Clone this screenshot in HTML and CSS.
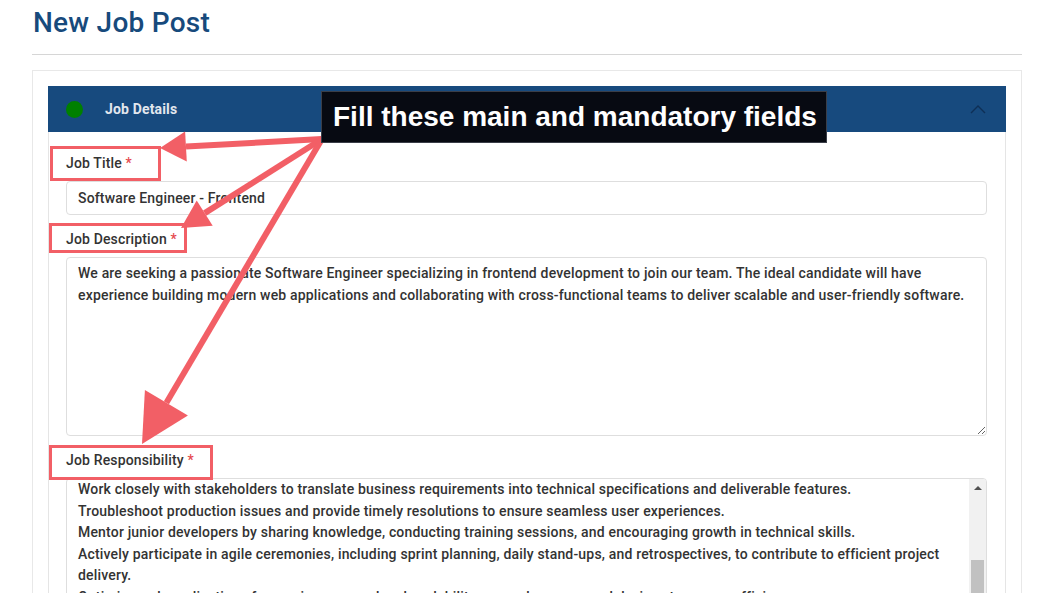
FILE: index.html
```html
<!DOCTYPE html>
<html lang="en">
<head>
<meta charset="utf-8">
<title>New Job Post</title>
<link rel="stylesheet" href="styles.css">
</head>
<body>
<div class="page">
  <h1 class="title">New Job Post</h1>
  <hr class="divider">
  <div class="card">
    <div class="panel">
      <div class="panel-head">
        <span class="dot"></span>
        <span class="panel-title">Job Details</span>
        <svg class="chevron" width="16" height="10" viewBox="0 0 16 10"><polyline points="1,9 8,2 15,9" fill="none" stroke="#0e2f56" stroke-width="1.4"/></svg>
      </div>
      <div class="panel-body">
        <div class="group">
          <label class="label">Job Title <span class="req">*</span></label>
          <input class="input" type="text" value="Software Engineer - Frontend">
        </div>
        <div class="group">
          <label class="label">Job Description <span class="req">*</span></label>
          <textarea class="textarea">We are seeking a passionate Software Engineer specializing in frontend development to join our team. The ideal candidate will have
experience building modern web applications and collaborating with cross-functional teams to deliver scalable and user-friendly software.</textarea>
        </div>
        <div class="group">
          <label class="label">Job Responsibility <span class="req">*</span></label>
          <div class="scrollbox">
            <div class="scroll-content">
              <div>Work closely with stakeholders to translate business requirements into technical specifications and deliverable features.</div>
              <div>Troubleshoot production issues and provide timely resolutions to ensure seamless user experiences.</div>
              <div>Mentor junior developers by sharing knowledge, conducting training sessions, and encouraging growth in technical skills.</div>
              <div>Actively participate in agile ceremonies, including sprint planning, daily stand-ups, and retrospectives, to contribute to efficient project delivery.</div>
              <div>Optimize web applications for maximum speed and scalability across browsers and devices to ensure efficiency.</div>
            </div>
            <div class="scrollbar">
              <span class="sb-arrow"></span>
              <span class="sb-thumb"></span>
            </div>
          </div>
        </div>
      </div>
    </div>
  </div>
</div>

<svg class="annot" width="1044" height="593" viewBox="0 0 1044 593">
  <g fill="none" stroke="#f25f66" stroke-width="3">
    <rect x="51.5" y="147.5" width="108" height="32"/>
    <rect x="50.5" y="224.5" width="135" height="27"/>
    <rect x="50.5" y="446.5" width="161" height="32"/>
  </g>
  <g stroke="#f25f66" stroke-width="6">
    <line x1="322" y1="139" x2="186" y2="146.6"/>
    <line x1="322" y1="139" x2="204.7" y2="213.1"/>
    <line x1="322" y1="139" x2="166.4" y2="402.7"/>
  </g>
  <g fill="#f25f66">
    <polygon points="160,148 186.8,161.6 185.1,131.6"/>
    <polygon points="181,228 212.7,225.8 196.7,200.4"/>
    <polygon points="142,444 187.9,415.4 144.9,390"/>
  </g>
</svg>
<div class="callout">Fill these main and mandatory fields</div>
</body>
</html>
```
FILE: styles.css
```css
html, body {
  margin: 0;
  padding: 0;
  height: 593px;
  overflow: hidden;
  background: #fff;
  font-family: Roboto, "Liberation Sans", Arial, sans-serif;
}

.page {
  padding: 6px 22px 0 32px;
}

.title {
  margin: 0;
  padding-left: 1px;
  font-size: 28px;
  line-height: 33px;
  font-weight: 500;
  letter-spacing: 0.25px;
  color: #174a7c;
}

.divider {
  margin: 15px 0 0;
  border: 0;
  border-top: 1px solid #d6d6d6;
  height: 0;
}

.card {
  margin-top: 15px;
  border: 1px solid #e8e8e8;
  border-bottom: 0;
  padding: 15px 15px 0;
}

.panel-head {
  height: 46px;
  background: #174a7e;
  display: flex;
  align-items: center;
  padding: 0 20px 0 18px;
}

.dot {
  width: 17px;
  height: 17px;
  border-radius: 50%;
  background: #008000;
}

.panel-title {
  margin-left: 22px;
  color: #e2e7ee;
  font-size: 14px;
  font-weight: 700;
  letter-spacing: 0.15px;
}

.chevron {
  margin-left: auto;
}

.panel-body {
  border: 1px solid #e5e5e5;
  border-top: 0;
  padding: 21px 18px 0 17px;
}

.group {
  margin-bottom: 14px;
}

.label {
  display: block;
  font-size: 14px;
  line-height: 20px;
  font-weight: 500;
  letter-spacing: 0.15px;
  color: #333;
  margin-bottom: 8px;
}

.req {
  color: #e5484d;
}

.input {
  display: block;
  box-sizing: border-box;
  width: 100%;
  height: 34px;
  border: 1px solid #dedede;
  border-radius: 4px;
  padding: 0 11px;
  font-family: inherit;
  font-size: 14px;
  font-weight: 500;
  letter-spacing: 0.17px;
  color: #333;
  outline: none;
}

.textarea {
  display: block;
  box-sizing: border-box;
  width: 100%;
  height: 179px;
  border: 1px solid #dedede;
  border-radius: 4px;
  padding: 4px 11px;
  font-family: inherit;
  font-size: 14px;
  line-height: 22px;
  font-weight: 500;
  letter-spacing: 0.18px;
  color: #333;
  outline: none;
  resize: vertical;
}

.scrollbox {
  display: flex;
  height: 200px;
  border: 1px solid #dedede;
  border-radius: 4px;
  overflow: hidden;
}

.scroll-content {
  flex: 1;
  padding: 0 11px;
  font-size: 14px;
  line-height: 21.5px;
  font-weight: 500;
  letter-spacing: 0.18px;
  color: #333;
}

.scrollbar {
  width: 17px;
  background: #f1f1f1;
  display: flex;
  flex-direction: column;
  align-items: center;
}

.sb-arrow {
  margin-top: 7px;
  width: 0;
  height: 0;
  border-left: 4px solid transparent;
  border-right: 4px solid transparent;
  border-bottom: 4px solid #505050;
}

.sb-thumb {
  margin-top: 70px;
  width: 13px;
  height: 90px;
  background: #c1c1c1;
}

.annot {
  position: absolute;
  left: 0;
  top: 0;
  pointer-events: none;
}

.callout {
  position: absolute;
  left: 321px;
  top: 91px;
  background: #070a12;
  border: 1px solid #3a3e48;
  color: #fff;
  font-family: "Liberation Sans", Arial, sans-serif;
  font-weight: 700;
  font-size: 28px;
  line-height: 30px;
  padding: 10px 9px 10px 11px;
  white-space: nowrap;
}
```
